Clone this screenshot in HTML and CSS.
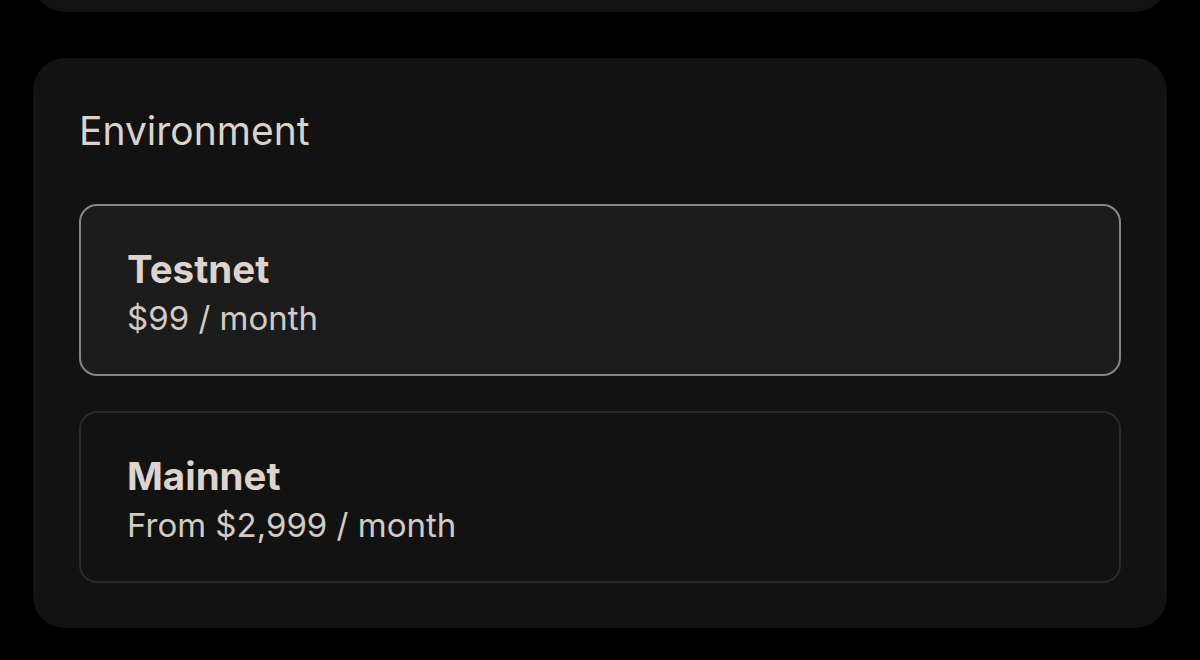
FILE: index.html
```html
<!DOCTYPE html>
<html lang="en">
<head>
<meta charset="utf-8">
<title>Environment</title>
<link rel="stylesheet" href="styles.css">
</head>
<body>
<div class="page">
  <div class="card card-top"></div>
  <section class="card env">
    <h2 class="env-title">Environment</h2>
    <div class="options">
      <div class="option selected">
        <div class="opt-name">Testnet</div>
        <div class="opt-price">$99 / month</div>
      </div>
      <div class="option">
        <div class="opt-name">Mainnet</div>
        <div class="opt-price">From $2,999 / month</div>
      </div>
    </div>
  </section>
</div>
</body>
</html>
```
FILE: styles.css
```css
html, body {
  margin: 0;
  padding: 0;
  background: #000;
}
body {
  font-family: Inter, "Noto Sans", "Liberation Sans", sans-serif;
  color: #dad2cb;
  overflow: hidden;
}
.page {
  padding: 0 33px;
  display: flex;
  flex-direction: column;
  gap: 46px;
}
.card {
  background: #121212;
  border-radius: 32px;
}
.card-top {
  height: 100px;
  margin-top: -88px;
  background: #131313;
}
.env {
  height: 570px;
  box-sizing: border-box;
  padding: 0 46px;
  display: flex;
  flex-direction: column;
}
.env-title {
  margin: 0;
  font-weight: 400;
  font-size: 39px;
  line-height: 48px;
  padding-top: 49px;
  height: 48px;
  letter-spacing: 0;
  color: #dad2cb;
}
.options {
  margin-top: 49px;
  display: flex;
  flex-direction: column;
  gap: 35px;
}
.option {
  height: 172px;
  box-sizing: border-box;
  border: 2px solid #2a2a2a;
  border-radius: 18px;
  padding: 40px 46px 0;
  display: flex;
  flex-direction: column;
}
.option.selected {
  border-color: #8b8580;
  background: #1c1c1c;
}
.opt-name {
  font-size: 38.5px;
  font-weight: 700;
  line-height: 46px;
  color: #dcd4cd;
}
.opt-price {
  font-size: 33px;
  line-height: 52px;
  color: #d2cbc5;
}
```
